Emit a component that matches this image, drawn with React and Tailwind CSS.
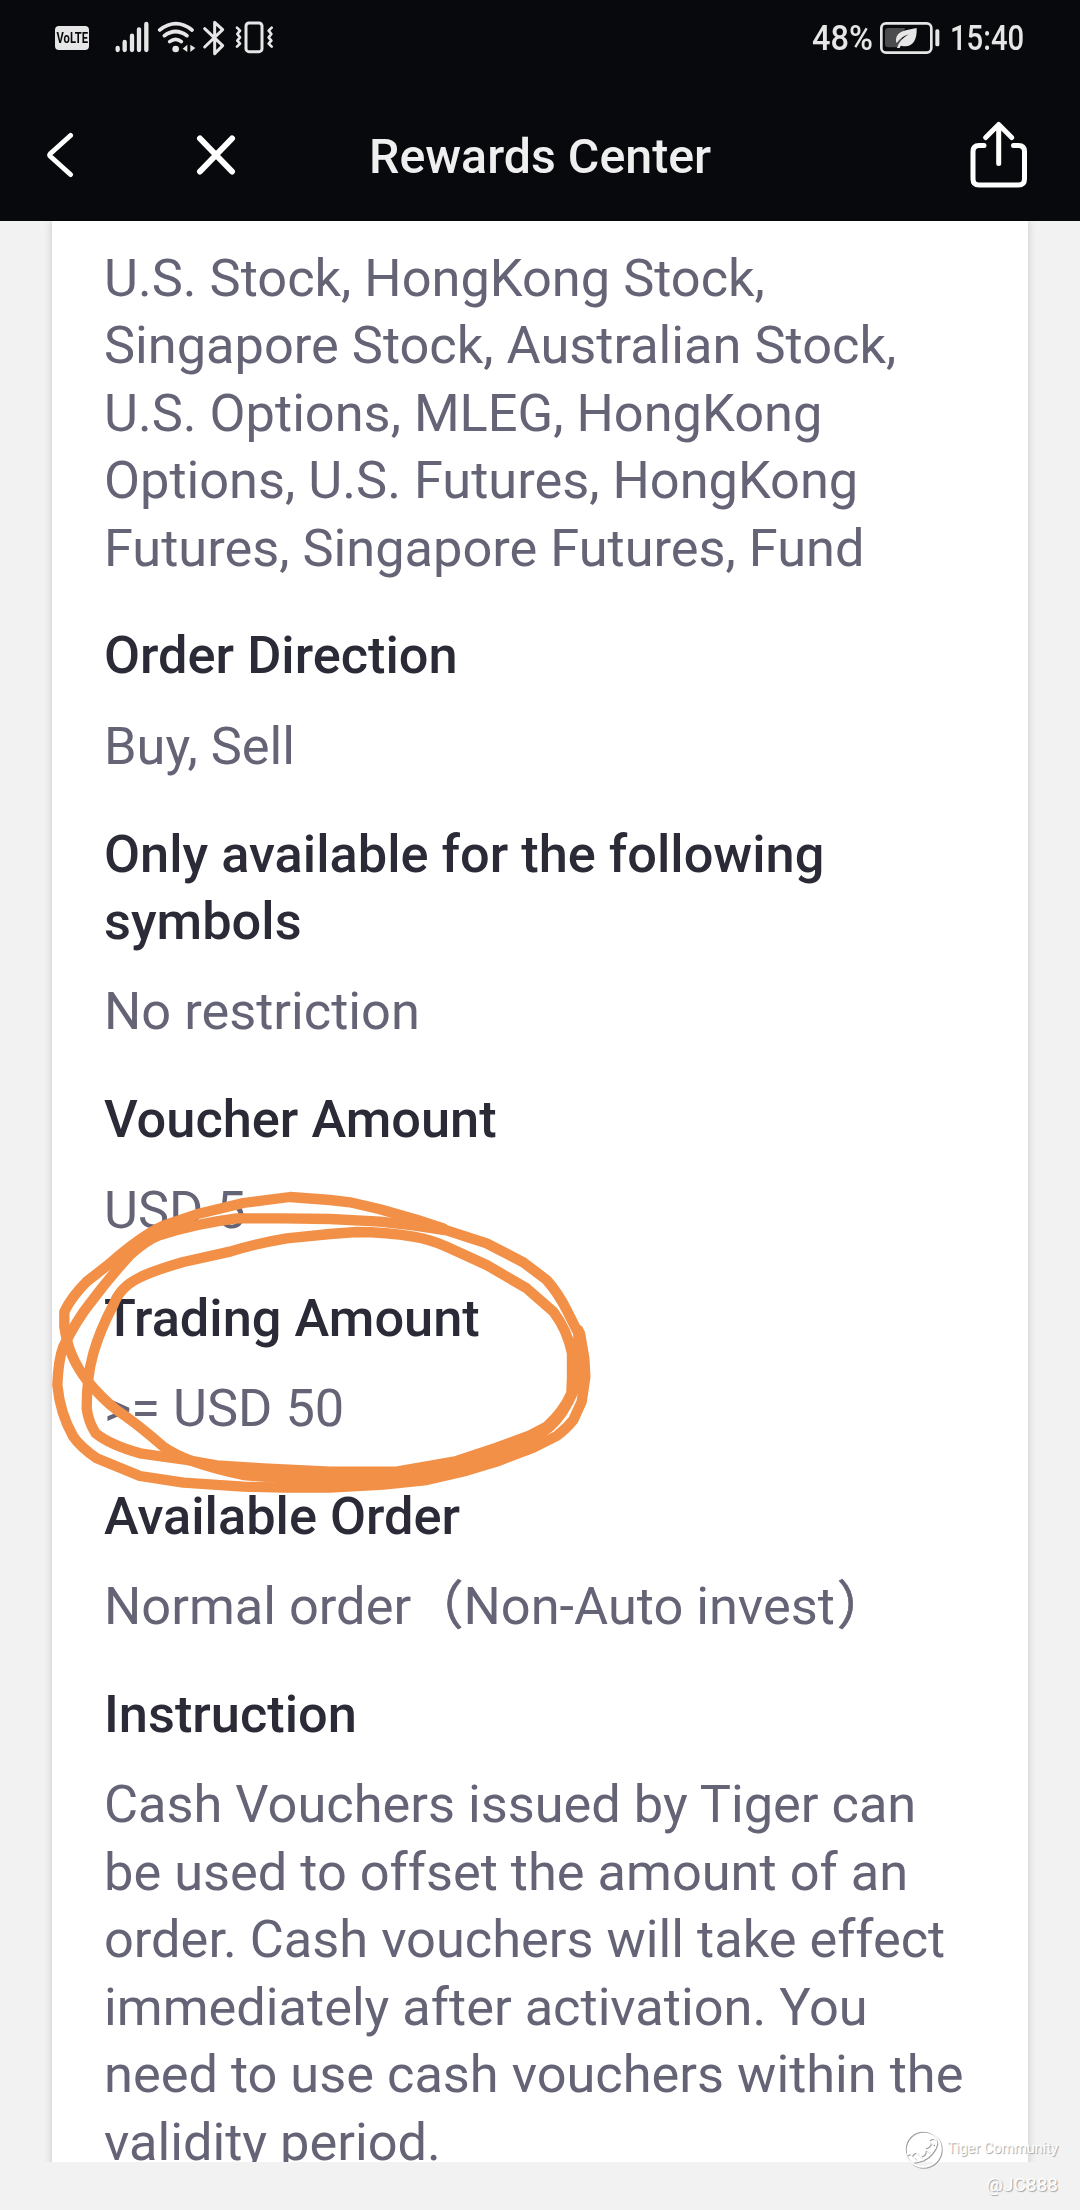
const sections = [
  {
    title: 'Order Direction',
    value: ['Buy, Sell']
  },
  {
    title: 'Only available for the following symbols',
    value: ['No restriction']
  },
  {
    title: 'Voucher Amount',
    value: ['USD 5']
  },
  {
    title: 'Trading Amount',
    value: ['>= USD 50']
  },
  {
    title: 'Available Order',
    value: ['Normal order'],
    note: 'Non-Auto invest'
  },
  {
    title: 'Instruction',
    value: [
      'Cash Vouchers issued by Tiger can',
      'be used to offset the amount of an',
      'order. Cash vouchers will take effect',
      'immediately after activation. You',
      'need to use cash vouchers within the',
      'validity period.'
    ]
  }
];

const products = [
  'U.S. Stock, HongKong Stock,',
  'Singapore Stock, Australian Stock,',
  'U.S. Options, MLEG, HongKong',
  'Options, U.S. Futures, HongKong',
  'Futures, Singapore Futures, Fund'
];

const Lines = ({ lines, note }) => (
  <p className="text-[#646476] whitespace-nowrap">
    {lines.map((line) => (
      <span key={line} className="block h-[67.5px]">
        {line}
        {note && (
          <>
            <span className="[-webkit-text-stroke:0.7px]">（</span>
            {note}
            <span className="ml-[2px] [-webkit-text-stroke:0.7px]">）</span>
          </>
        )}
      </span>
    ))}
  </p>
);

const StatusBar = () => (
  <div className="h-[90px] flex items-start justify-between pl-[55px] pr-[57px] pt-[20px] text-[#e6e6e6]">
    <div className="flex items-start">
      <div className="mt-[6px] w-[34px] h-[24px] rounded-[4px] bg-[#e6e6e6] flex items-center justify-center">
        <span className="text-[13px] leading-none font-bold text-[#08090c] scale-x-[.86] scale-y-110">VoLTE</span>
      </div>
      <svg className="ml-[25px] w-[36px] h-[34px]" viewBox="222 30 108 102" stroke="currentColor" strokeWidth="13" strokeLinecap="round">
        <path d="M233 114v6M254 96v24M276 77v43M297 58v62M319 42v78" />
      </svg>
      <svg className="ml-[7px] w-[40px] h-[34px]" viewBox="352 30 120 102" fill="none" stroke="currentColor" strokeLinecap="round">
        <path d="M360 60q49-38 97 0" strokeWidth="11" />
        <path d="M374 77q34-25 68 0" strokeWidth="11" />
        <path d="M390 95q18-14 35 0" strokeWidth="11" />
        <circle cx="408" cy="117" r="10" fill="currentColor" stroke="none" />
        <path d="M443 104v22l-14-10zM452 104v22l15-12z" fill="currentColor" stroke="none" />
      </svg>
      <svg className="ml-[5px] w-[24px] h-[36px]" viewBox="487 27 72 108" fill="none" stroke="currentColor" strokeWidth="9" strokeLinecap="round" strokeLinejoin="round">
        <path d="M495 53l54 51-24 24V34l24 22-54 52" />
      </svg>
      <svg className="ml-[8px] w-[40px] h-[34px]" viewBox="585 30 120 102" fill="none" stroke="currentColor" strokeLinecap="round" strokeLinejoin="round">
        <rect x="621" y="39" width="48" height="86" rx="9" strokeWidth="9" />
        <path d="M594 53l9 9-8 10 8 10-8 10 8 9-9 9M698 53l-9 9 8 10-8 10 8 10-8 9 9 9" strokeWidth="8" />
      </svg>
    </div>
    <div className="flex items-start">
      <span className="w-[62px] text-[35px] leading-[38px] font-medium">
        <span className="inline-block origin-left scale-x-[.93]">48%</span>
      </span>
      <svg className="ml-[5px] w-[63px] h-[36px]" viewBox="297 29 189 108" fill="none">
        <rect x="304" y="39" width="150" height="88" rx="14" stroke="currentColor" strokeWidth="8" />
        <path d="M325 53h50l-16 58h-34q-10 0-10-9V62q0-9 10-9z" fill="#4b4c4e" />
        <rect x="466" y="57" width="12" height="51" rx="5" fill="currentColor" />
        <path d="M410 53c-30 6-60 8-62 34q-1 6 2 11c11-14 22-22 38-26-17 8-30 20-37 41h8q1-5 4-7c32 8 49-13 47-53z" fill="currentColor" />
      </svg>
      <span className="ml-[8px] w-[73px] text-[35px] leading-[38px] font-medium">
        <span className="inline-block origin-left scale-x-[.835]">15:40</span>
      </span>
    </div>
  </div>
);

const NavBar = () => (
  <div className="h-[131px] grid grid-cols-[369px_1fr_auto] items-start pr-[52px] text-white">
    <div className="flex items-start">
      <svg className="ml-[45px] mt-[42px] w-[30px] h-[46px]" viewBox="0 0 30 46" fill="none" stroke="currentColor" strokeWidth="5" strokeLinecap="round" strokeLinejoin="round">
        <path d="M25.5 3.5L5.5 21.5q-1.5 1.5 0 3L25.5 42.5" />
      </svg>
      <svg className="ml-[120px] mt-[45px] w-[42px] h-[40px]" viewBox="0 0 42 40" fill="none" stroke="currentColor" strokeWidth="6" strokeLinecap="round">
        <path d="M5 3.5l32 33M37 3.5L5 36.5" />
      </svg>
    </div>
    <h1 className="mt-[39px] text-[48.3px] leading-[56px] font-medium whitespace-nowrap text-[#efeff0]">Rewards Center</h1>
    <svg className="mt-[31px] w-[58px] h-[68px]" viewBox="0 0 58 68" fill="none" stroke="currentColor" strokeWidth="5" strokeLinecap="round" strokeLinejoin="round">
      <path d="M14 24.5h-5q-6 0-6 6v27.5q0 6 6 6h39.5q6 0 6-6V30.5q0-6-6-6h-5" />
      <path d="M28.7 42.5V4.5M15.7 16.5l13-13 13 13" />
    </svg>
  </div>
);

// Hand-drawn marker loops around the trading amount
const Marker = () => (
  <svg
    className="absolute left-[30px] top-[1160px] w-[567px] h-[350px] pointer-events-none"
    viewBox="0 0 1701 1050"
    fill="none"
    stroke="#f29047"
    strokeWidth="31"
    strokeLinecap="round"
    strokeLinejoin="round"
  >
    <path d="M1240 205L1160 179L1050 148L960 127L900 120L780 111L640 129L500 163L400 197Q330 230 240 310L170 365Q125 410 103 455V500Q115 590 170 660Q215 715 260 750Q320 790 400 860Q470 910 640 945L760 955L1000 962L1100 955L1200 945L1300 920L1400 885L1500 845L1560 800Q1600 765 1632 690L1645 600L1645 510" />
    <path d="M390 225Q500 190 620 175H760L900 177L1050 185L1150 196L1250 211L1370 250L1480 307L1550 360Q1585 400 1610 450L1640 510L1650 520L1663 595L1666 650L1655 725L1630 780Q1610 805 1580 828L1510 863L1400 905L1310 932L1190 960L1060 974L900 983H760L640 980L460 968L330 948L200 895Q150 860 130 830Q90 760 82 675Q85 600 100 560Q140 480 180 430Q240 350 300 285Q350 240 390 225" />
    <path d="M900 222L980 216Q1070 216 1150 230Q1200 238 1250 260L1370 315L1490 385L1570 455Q1612 510 1626 580V650L1624 700Q1600 755 1550 800L1500 826L1400 863L1280 903L1100 935H900L700 925L560 916L470 900L330 880Q240 855 197 820Q175 785 170 745Q170 650 190 580Q210 510 250 435Q270 380 330 352Q370 332 460 306L600 275Q680 250 770 235L900 222" />
  </svg>
);

const Watermark = () => (
  <div className="absolute right-[22px] top-[2129px] flex flex-col items-end text-white [text-shadow:1px_1px_1px_#a0a0a0]">
    <div className="flex items-center h-[40px]">
      <svg className="w-[40px] h-[40px] mr-[4px] drop-shadow-[1px_1px_0.5px_#a0a0a0]" viewBox="0 0 40 40" fill="none" stroke="#fff" strokeWidth="1.5">
        <circle cx="20" cy="20" r="18" />
        <path d="M4 26q3-3 5 0 2-4 5-2l3 3q5-1 5-5l-1-3q5-1 6-4l-2-3q3-4 7-2 3 3 0 9-7 13-22 14M11 28l2 5M17 27l4 4M21 19l6 5M26 12l5 4" />
      </svg>
      <span className="text-[14.5px] leading-none whitespace-nowrap">Tiger Community</span>
    </div>
    <span className="mt-[5px] text-[19px] leading-[22px]">@JC888</span>
  </div>
);

const App = () => {
  return (
    <div className="relative w-[1080px] h-[2210px] overflow-hidden bg-[#f2f2f2] font-[Roboto,'Noto_Sans_CJK_SC',sans-serif]">
      <header className="bg-[#08090c]">
        <StatusBar />
        <NavBar />
      </header>

      {/* Voucher details */}
      <main className="h-[1941px] overflow-hidden px-[52px]">
        <div className="h-[2100px] bg-white pl-[52px] pt-[23.5px] shadow-[0_0_8px_rgba(0,0,0,0.18)] text-[52.35px] leading-[67.5px]">
          <Lines lines={products} />
          {sections.map((section) => (
            <section key={section.title} className="pt-[40.45px]">
              <h2 className="w-[800px] mb-[22.75px] font-medium text-[#2b2b38]">{section.title}</h2>
              <Lines lines={section.value} note={section.note} />
            </section>
          ))}
        </div>
      </main>

      <Marker />
      <Watermark />
    </div>
  );
};

export default App;
